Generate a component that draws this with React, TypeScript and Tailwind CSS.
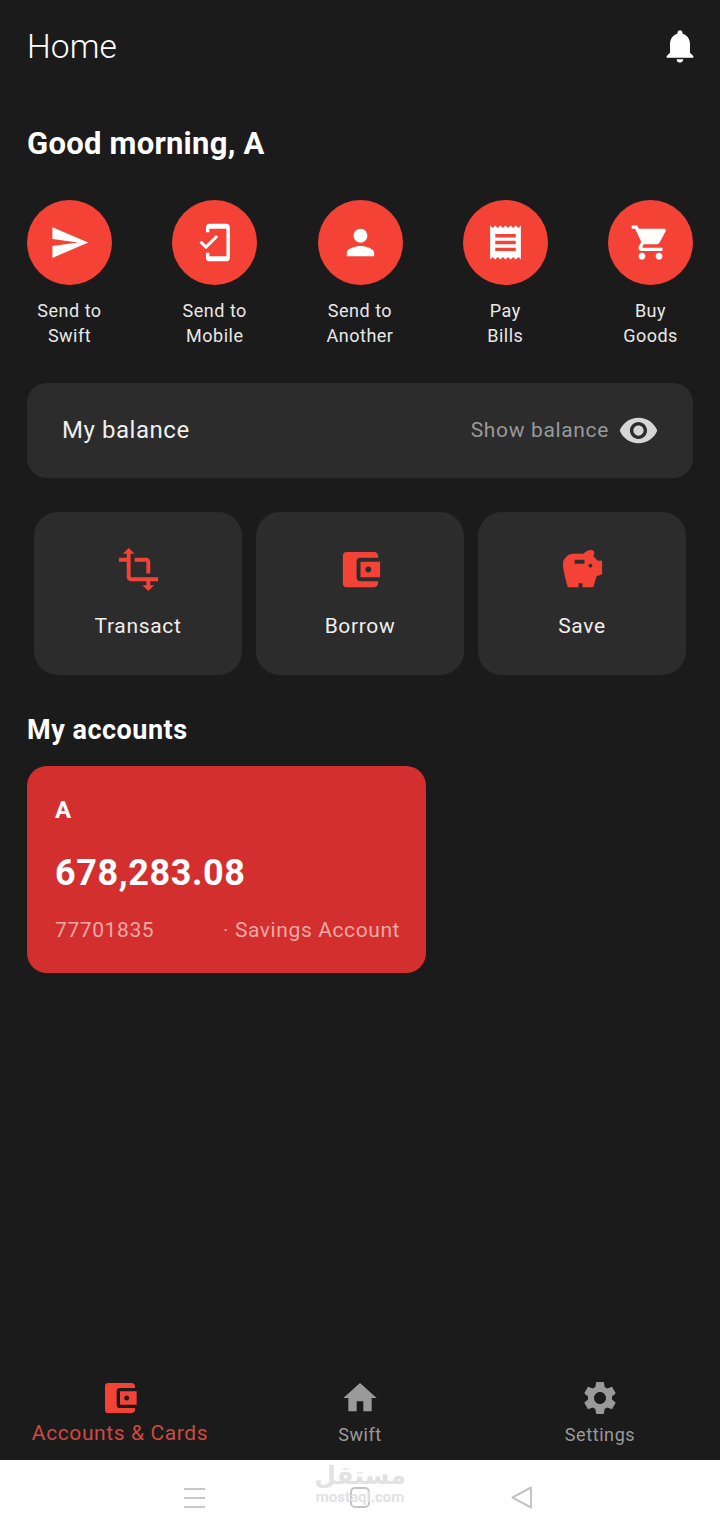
import {
  MdNotifications,
  MdSend,
  MdOutlineMobileFriendly,
  MdPerson,
  MdReceipt,
  MdShoppingCart,
  MdVisibility,
  MdTransform,
  MdAccountBalanceWallet,
  MdSavings,
  MdHome,
  MdSettings,
} from "react-icons/md";

const quickActions = [
  { icon: MdSend, top: "Send to", bottom: "Swift" },
  { icon: MdOutlineMobileFriendly, top: "Send to", bottom: "Mobile" },
  { icon: MdPerson, top: "Send to", bottom: "Another" },
  { icon: MdReceipt, top: "Pay", bottom: "Bills" },
  { icon: MdShoppingCart, top: "Buy", bottom: "Goods" },
];

const tiles = [
  { icon: MdTransform, label: "Transact" },
  { icon: MdAccountBalanceWallet, label: "Borrow" },
  { icon: MdSavings, label: "Save" },
];

export default function App() {
  return (
    <div className="w-[720px] h-[1535px] flex flex-col bg-[#1b1b1b] text-white font-['Roboto',sans-serif] overflow-hidden">
      <main className="flex-1 flex flex-col">
        {/* HEADER */}
        <header className="flex justify-between items-center pl-[27px] pr-[20px] pt-[25px] h-[68px]">
          <h1 className="text-[33.5px] leading-[44px] font-light tracking-[0.1px]">Home</h1>
          <MdNotifications size={40} className="text-white -mt-[2px]" />
        </header>

        {/* GREETING */}
        <h2 className="mt-[55px] pl-[27px] text-[31px] leading-[42px] font-bold tracking-[0.25px]">Good morning, A</h2>

        {/* QUICK ACTIONS */}
        <div className="mt-[35px] px-[27px] flex justify-between">
          {quickActions.map((item) => (
            <div key={item.bottom} className="w-[85px] flex flex-col items-center">
              <div className="w-[85px] h-[85px] rounded-full bg-[#f44336] flex items-center justify-center">
                <item.icon size={41} className="text-white" />
              </div>
              <div className="mt-[13px] text-[18px] leading-[25px] tracking-[0.5px] text-center text-[#e8e8e8] whitespace-nowrap">
                <div>{item.top}</div>
                <div>{item.bottom}</div>
              </div>
            </div>
          ))}
        </div>

        {/* BALANCE */}
        <div className="mt-[35px] mx-[27px] h-[95px] rounded-[20px] bg-[#2c2c2c] flex items-center justify-between pl-[35px] pr-[34px]">
          <span className="text-[24px] tracking-[0.55px] text-[#efefef] -mt-[2px]">My balance</span>
          <div className="flex items-center gap-[9px]">
            <span className="text-[21px] tracking-[0.65px] text-[#999999]">Show balance</span>
            <MdVisibility size={41} className="text-[#d6d6d6]" />
          </div>
        </div>

        {/* TILES */}
        <div className="mt-[34px] px-[34px] grid grid-cols-3 gap-[14px]">
          {tiles.map((tile) => (
            <div key={tile.label} className="h-[163px] rounded-[24px] bg-[#2c2c2c] flex flex-col items-center pt-[34px]">
              <tile.icon size={47} className="text-[#f44336]" />
              <span className="mt-[19px] text-[21px] leading-[28px] tracking-[0.65px] text-[#efefef]">{tile.label}</span>
            </div>
          ))}
        </div>

        {/* ACCOUNTS */}
        <h3 className="mt-[37px] pl-[27px] text-[27px] leading-[36px] font-bold tracking-[0.5px]">My accounts</h3>
        <div className="mt-[18px] ml-[27px] w-[399px] h-[207px] rounded-[20px] bg-[#d32f2f] pl-[28px] pt-[29px]">
          <div className="text-[24px] leading-[30px] font-bold">A</div>
          <div className="mt-[25px] text-[36px] leading-[46px] font-bold tracking-[0.6px]">678,283.08</div>
          <div className="mt-[19px] flex text-[21px] leading-[30px] tracking-[0.6px] text-[#f0a8a5] whitespace-nowrap">
            <span className="w-[168px]">77701835</span>
            <span>· Savings Account</span>
          </div>
        </div>
      </main>

      {/* BOTTOM NAV */}
      <nav className="h-[90px] flex">
        <div className="w-[240px] flex flex-col items-center pt-[8px]">
          <MdAccountBalanceWallet size={40} className="text-[#f44336]" />
          <span className="text-[21px] leading-[30px] tracking-[0.6px] text-[#cf4a40]">Accounts &amp; Cards</span>
        </div>
        <div className="w-[240px] flex flex-col items-center pt-[8px]">
          <MdHome size={40} className="text-[#9a9a9a]" />
          <span className="mt-[3px] text-[18px] leading-[28px] tracking-[0.6px] text-[#9a9a9a]">Swift</span>
        </div>
        <div className="w-[240px] flex flex-col items-center pt-[8px]">
          <MdSettings size={40} className="text-[#9a9a9a]" />
          <span className="mt-[3px] text-[18px] leading-[28px] tracking-[0.6px] text-[#9a9a9a]">Settings</span>
        </div>
      </nav>

      {/* SYSTEM BAR */}
      <div className="relative h-[75px] bg-white flex items-center justify-center gap-[145px] pr-[4px]">
        <svg width="21" height="20" viewBox="0 0 21 20" fill="none" stroke="#c8c8c8" strokeWidth="2">
          <path d="M0 1h21M0 10h21M0 19h21" />
        </svg>
        <svg width="20" height="21" viewBox="0 0 20 21" fill="none" stroke="#c4c4c4" strokeWidth="2">
          <rect x="1" y="1" width="18" height="19" rx="4" />
        </svg>
        <svg width="21" height="23" viewBox="0 0 21 23" fill="none" stroke="#c4c4c4" strokeWidth="2" strokeLinejoin="round" className="-ml-[4px]">
          <path d="M20 1.5 1.5 11.5 20 21.5z" />
        </svg>
        {/* watermark */}
        <div className="absolute left-[316px] top-[1px] w-[88px] flex flex-col items-center text-[#e2e2e2]">
          <span className="text-[25px] leading-[30px] font-bold font-['DejaVu_Sans',sans-serif]">مستقل</span>
          <span className="text-[15px] leading-[13px] font-bold whitespace-nowrap">mostaql.com</span>
        </div>
      </div>
    </div>
  );
}
